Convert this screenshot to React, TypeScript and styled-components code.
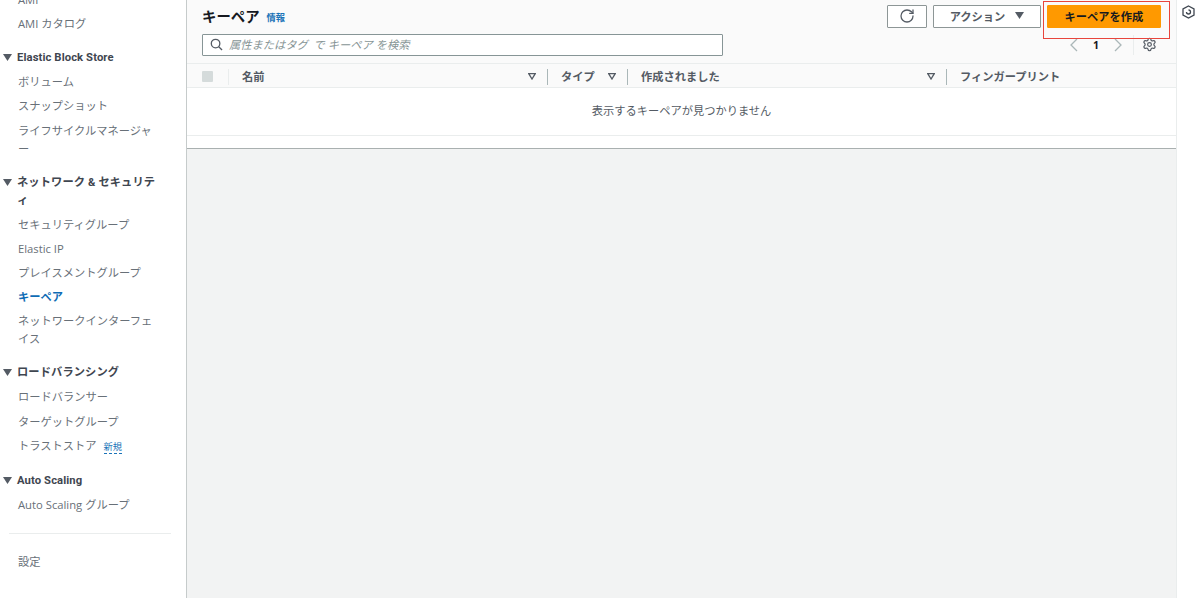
import React from "react";
import styled, { createGlobalStyle } from "styled-components";
import { RotateCw, Settings } from "lucide-react";

const Global = createGlobalStyle`
  html, body { margin: 0; padding: 0; height: 598px; overflow: hidden; background: #fff; }
  body { font-family: "Open Sans", "Noto Sans CJK JP", sans-serif; font-size: 11.25px; color: #545b64; }
  #root { height: 598px; }
`;
const Page = styled.div`
  display: grid;
  grid-template-columns: 187px 989px 24px;
  height: 598px;
  overflow: hidden;
`;
const Sidebar = styled.nav`
  border-right: 1px solid #c6cbcb;
  overflow: hidden;
`;
const NavScroll = styled.div`
  margin-top: -9px;
  display: flex;
  flex-direction: column;
`;
const NavSection = styled.div`
  display: flex;
  flex-direction: column;
  padding-bottom: 10px;
`;
const NavHead = styled.div`
  display: flex;
  gap: 5px;
  padding: 0 24px 0 3px;
  line-height: 18px;
  margin-bottom: 6px;
  font-family: Roboto, "Noto Sans CJK JP", sans-serif;
  font-weight: 700;
  letter-spacing: 0.1px;
  color: #3f4650;
  svg { flex: none; margin-top: 5px; }
`;
const NavItem = styled.div<{ $active?: boolean }>`
  padding: 0 32px 0 18px;
  line-height: 18px;
  margin-bottom: 6.15px;
  color: ${(p) => (p.$active ? "#0f6cb5" : "#687078")};
  font-weight: ${(p) => (p.$active ? 700 : 400)};
`;
const NewTag = styled.span`
  color: #1a73b8;
  font-size: 9.25px;
  margin-left: 7px;
  border-bottom: 1px dashed #1a73b8;
`;
const NavDivider = styled.hr`
  border: 0;
  border-top: 1px solid #eaeded;
  margin: 3px 15px 19px 9px;
`;
const Main = styled.main`
  position: relative;
  display: flex;
  flex-direction: column;
  background: #f2f3f3;
`;
const Panel = styled.section`
  background: #fff;
  border-bottom: 1px solid #a9b0b0;
  height: 148px;
  box-sizing: content-box;
`;
const Top = styled.div`
  height: 63px;
  background: #fafafa;
  border-bottom: 1px solid #eaeded;
  padding: 0 15px 0 15px;
  display: grid;
  grid-template-columns: 1fr auto;
  grid-template-rows: 33px 30px;
`;
const TitleRow = styled.div`
  display: flex;
  align-items: center;
  gap: 7px;
  padding-bottom: 3px;
`;
const Title = styled.h1`
  margin: 0;
  font-size: 14.4px;
  font-weight: 700;
  color: #16191f;
`;
const Info = styled.a`
  color: #1a73b8;
  font-size: 9.25px;
  font-weight: 600;
  margin-top: 3px;
`;
const Actions = styled.div`
  display: flex;
  align-items: flex-start;
  gap: 6px;
  padding: 5px 0 0;
`;
const Button = styled.button<{ $w: number }>`
  width: ${(p) => p.$w}px;
  height: 23px;
  box-sizing: border-box;
  background: #fff;
  border: 1px solid #8d9696;
  border-radius: 1px;
  font: 700 11.25px "Open Sans", "Noto Sans CJK JP", sans-serif;
  color: #545b64;
  display: flex;
  align-items: center;
  justify-content: center;
  gap: 10px;
  padding: 0 0 2px;
`;
const Primary = styled(Button)`
  background: #ff9900;
  border-color: #ff9900;
  color: #16191f;
`;
const RedBox = styled.div`
  position: absolute;
  left: 856px;
  top: 1px;
  width: 127px;
  height: 38px;
  box-sizing: border-box;
  border: 1px solid #e8453c;
`;
const SearchBox = styled.div`
  width: 521px;
  height: 22px;
  box-sizing: border-box;
  align-self: start;
  margin-top: 1px;
  background: #fff;
  border: 1px solid #879596;
  border-radius: 1px;
  display: flex;
  align-items: center;
  gap: 6px;
  padding: 0 7px 2px;
  font-style: italic;
  color: #879596;
  white-space: pre;
`;
const Pager = styled.div`
  display: flex;
  align-items: center;
  justify-content: flex-end;
  align-self: start;
  height: 23px;
  padding-right: 4px;
  font-weight: 700;
  color: #16191f;
  font-size: 10.5px;
`;
const PagerNum = styled.span`
  width: 36px;
  text-align: center;
`;
const PagerSep = styled.span`
  width: 1px;
  height: 20px;
  background: #eaeded;
  margin: 0 8px 0 10px;
`;
const HeadRow = styled.div`
  height: 24px;
  box-sizing: border-box;
  background: #fafafa;
  border-bottom: 1px solid #eaeded;
  display: grid;
  grid-template-columns: 27px 319px 80px 319px 1fr;
  align-items: center;
  padding: 2px 0 0 15px;
  font-weight: 700;
  color: #545b64;
`;
const CheckCell = styled.div`
  height: 16px;
  display: flex;
  align-items: center;
  border-right: 1px solid #eaeded;
`;
const Check = styled.div`
  width: 11px;
  height: 11px;
  background: #d5dbdb;
  border-radius: 1px;
`;
const HeadCell = styled.div<{ $last?: boolean }>`
  height: 16px;
  line-height: 16px;
  display: flex;
  align-items: center;
  justify-content: space-between;
  padding: 0 11px 0 13px;
  border-right: ${(p) => (p.$last ? "0" : "1px solid #aab7b8")};
`;
const EmptyRow = styled.div`
  height: 48px;
  box-sizing: border-box;
  border-bottom: 1px solid #eaeded;
  display: flex;
  align-items: center;
  justify-content: center;
  padding-bottom: 4px;
  color: #545b64;
`;
const Rail = styled.aside`
  border-left: 1px solid #eaeded;
  display: flex;
  justify-content: center;
  padding-top: 5px;
  align-items: flex-start;
`;

const Caret = () => (
  <svg width="9" height="7" viewBox="0 0 9 7"><path d="M0 0h9L4.5 7z" fill="#545b64" /></svg>
);
const Filter = () => (
  <svg width="8" height="7" viewBox="0 0 8 7"><path d="M.8.7h6.4L4 6z" fill="none" stroke="#545b64" strokeWidth="1.3" /></svg>
);

export default function App() {
  return (
    <>
      <Global />
      <Page>
        <Sidebar>
          <NavScroll>
            <NavSection>
              <NavItem>AMI</NavItem>
              <NavItem>AMI カタログ</NavItem>
            </NavSection>
            <NavSection>
              <NavHead><Caret />Elastic Block Store</NavHead>
              <NavItem>ボリューム</NavItem>
              <NavItem>スナップショット</NavItem>
              <NavItem>ライフサイクルマネージャー</NavItem>
            </NavSection>
            <NavSection>
              <NavHead><Caret />ネットワーク &amp; セキュリティ</NavHead>
              <NavItem>セキュリティグループ</NavItem>
              <NavItem>Elastic IP</NavItem>
              <NavItem>プレイスメントグループ</NavItem>
              <NavItem $active>キーペア</NavItem>
              <NavItem>ネットワークインターフェイス</NavItem>
            </NavSection>
            <NavSection>
              <NavHead><Caret />ロードバランシング</NavHead>
              <NavItem>ロードバランサー</NavItem>
              <NavItem>ターゲットグループ</NavItem>
              <NavItem>トラストストア<NewTag>新規</NewTag></NavItem>
            </NavSection>
            <NavSection>
              <NavHead><Caret />Auto Scaling</NavHead>
              <NavItem>Auto Scaling グループ</NavItem>
            </NavSection>
            <NavDivider />
            <NavItem>設定</NavItem>
          </NavScroll>
        </Sidebar>
        <Main>
          <Panel>
            <Top>
              <TitleRow>
                <Title>キーペア</Title>
                <Info>情報</Info>
              </TitleRow>
              <Actions>
                <Button $w={40} aria-label="更新"><RotateCw size={16} strokeWidth={1.9} /></Button>
                <Button $w={108}>アクション<Caret /></Button>
                <Primary $w={114}>キーペアを作成</Primary>
              </Actions>
              <SearchBox>
                <svg width="13" height="13" viewBox="0 0 14 14" fill="none" stroke="#545b64" strokeWidth="1.4">
                  <circle cx="6" cy="6" r="4.6" /><path d="M9.4 9.4 13 13" />
                </svg>
                属性またはタグ  で キーペア を検索
              </SearchBox>
              <Pager>
                <svg width="9" height="14" viewBox="0 0 9 14" fill="none" stroke="#aab7b8" strokeWidth="1.3"><path d="M8 1 2 7l6 6" /></svg>
                <PagerNum>1</PagerNum>
                <svg width="9" height="14" viewBox="0 0 9 14" fill="none" stroke="#aab7b8" strokeWidth="1.3"><path d="m1 1 6 6-6 6" /></svg>
                <PagerSep />
                <Settings size={15} strokeWidth={1.9} color="#545b64" />
              </Pager>
            </Top>
            <HeadRow>
              <CheckCell><Check /></CheckCell>
              <HeadCell>名前<Filter /></HeadCell>
              <HeadCell>タイプ<Filter /></HeadCell>
              <HeadCell>作成されました<Filter /></HeadCell>
              <HeadCell $last>フィンガープリント</HeadCell>
            </HeadRow>
            <EmptyRow>表示するキーペアが見つかりません</EmptyRow>
          </Panel>
          <RedBox />
        </Main>
        <Rail>
          <svg width="13" height="14" viewBox="0 0 13 14" fill="none" stroke="#3f4650" strokeWidth="1.3">
            <path d="M6.5 1 12 4v6l-5.5 3L1 10V4z" /><path d="M4.5 7a2 2 0 1 0 2-2" />
          </svg>
        </Rail>
      </Page>
    </>
  );
}
